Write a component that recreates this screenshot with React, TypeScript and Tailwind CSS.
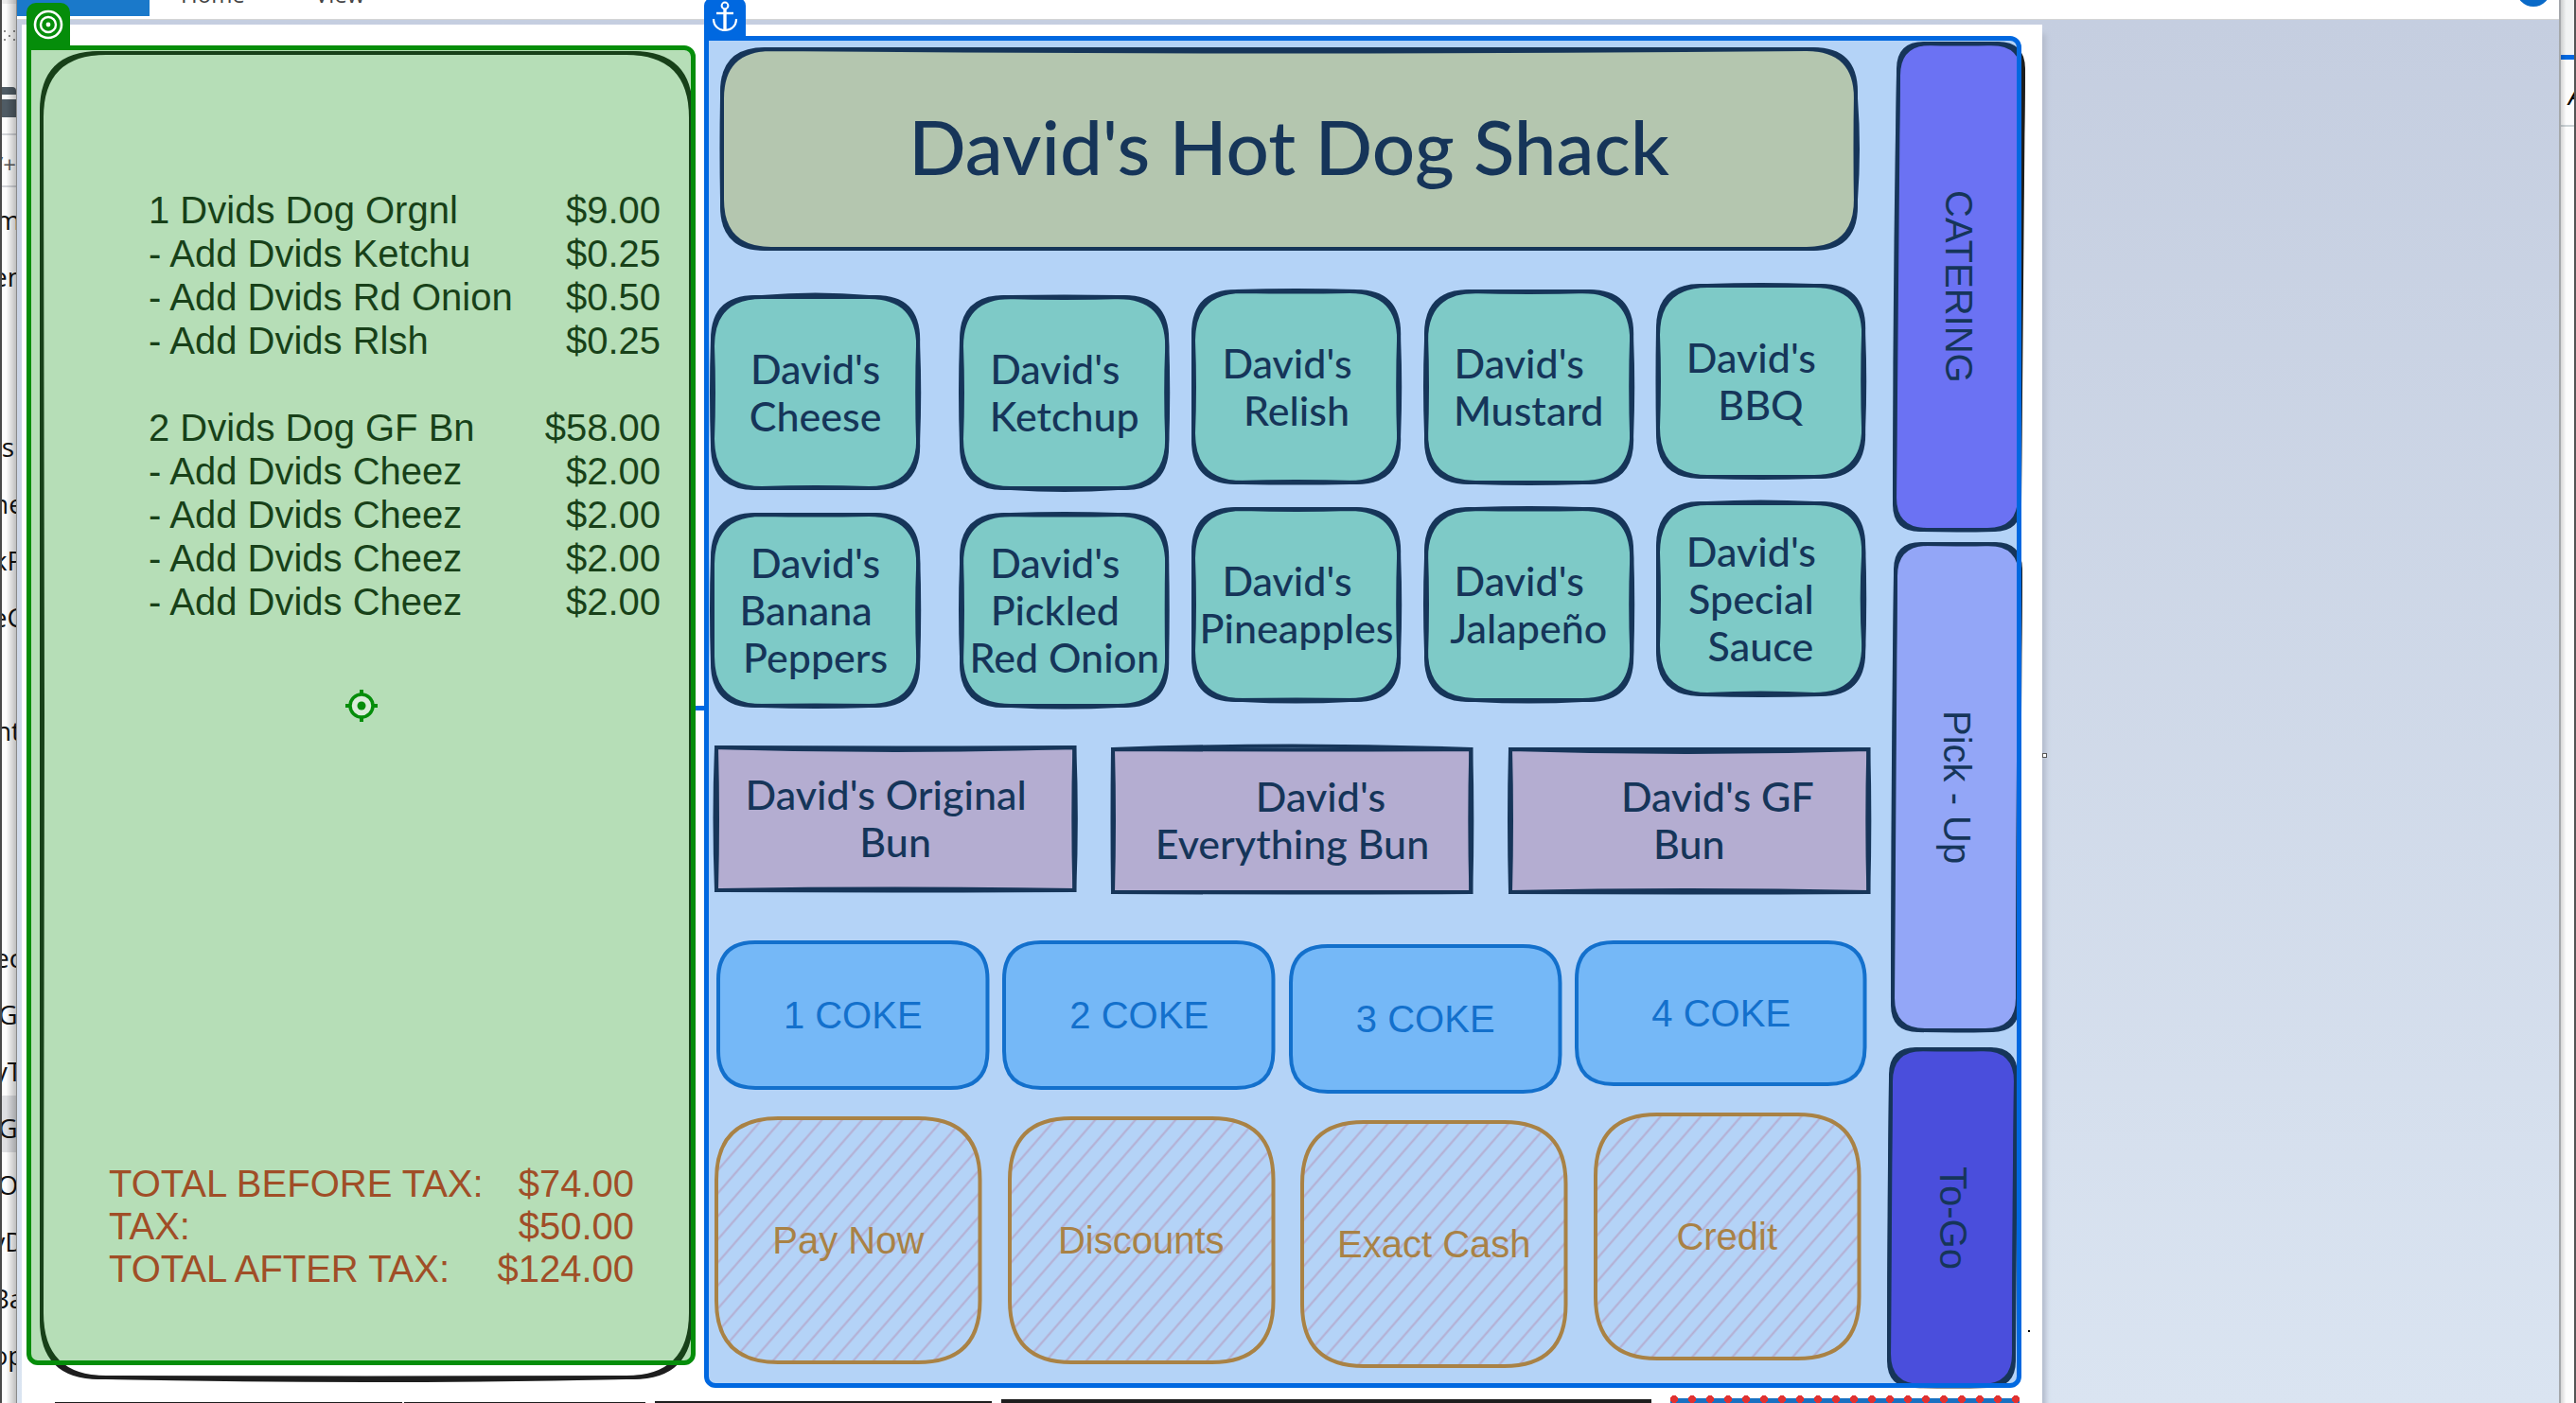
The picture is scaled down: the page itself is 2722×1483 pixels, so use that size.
import React, { useId } from "react";

type Bow = [number, number, number, number];

const roundedPath = (w: number, h: number, r: number, bow: Bow, skew = 0, inset = 2) => {
  const l = inset;
  const t = inset;
  const x = w - inset;
  const y = h - inset;
  const s = skew;
  return [
    `M${l + r + s} ${t}`,
    `Q${w / 2} ${t + bow[0]} ${x - r + s} ${t}`,
    `Q${x + s} ${t} ${x + s} ${t + r}`,
    `Q${x + bow[1]} ${h / 2} ${x} ${y - r}`,
    `Q${x} ${y} ${x - r} ${y}`,
    `Q${w / 2} ${y + bow[2]} ${l + r} ${y}`,
    `Q${l} ${y} ${l} ${y - r}`,
    `Q${l + bow[3]} ${h / 2} ${l + s} ${t + r}`,
    `Q${l + s} ${t} ${l + r + s} ${t}Z`,
  ].join(" ");
};

type SketchProps = {
  w: number;
  h: number;
  r: number;
  fill: string;
  stroke: string;
  bows?: Bow[];
  skew?: number;
  hatch?: boolean;
};

function Sketch({ w, h, r, fill, stroke, bows = [[0, 0, 0, 0]], skew = 0, hatch = false }: SketchProps) {
  const id = useId();
  return (
    <svg
      viewBox={`0 0 ${w} ${h}`}
      preserveAspectRatio="none"
      className="absolute inset-0 h-full w-full overflow-visible"
      aria-hidden="true"
    >
      {hatch && (
        <pattern id={id} width="16" height="16" patternUnits="userSpaceOnUse" patternTransform="rotate(41)">
          <line x1="8" y1="0" x2="8" y2="16" stroke={fill} strokeWidth="2" />
        </pattern>
      )}
      <path d={roundedPath(w, h, r, [0, 0, 0, 0], skew)} fill={hatch ? `url(#${id})` : fill} />
      {bows.map((bow, i) => (
        <path
          key={i}
          d={roundedPath(w, h, r + (i === 0 ? 0 : -7), bow, skew)}
          fill="none"
          stroke={stroke}
          strokeWidth="4"
          strokeLinejoin="round"
        />
      ))}
    </svg>
  );
}

const INK = "#1e1e1e";
const HAND = "font-[Excalifont,Virgil,Lato,sans-serif] font-medium";

type Line = { text: string; pad?: string };
type Topping = { lines: Line[]; align: string; bows: Bow[] };

const david: Line = { text: "David's", pad: "pr-5" };

const toppingRows: Topping[][] = [
  [
    { lines: [{ text: "David's" }, { text: "Cheese" }], align: "self-end mr-[18px]", bows: [[-5, 2, -2, 2], [0, -2, 0, -2]] },
    { lines: [david, { text: "Ketchup" }], align: "self-end", bows: [[-1, -2, 4, 2], [2, 2, 0, -2]] },
    { lines: [david, { text: "Relish" }], align: "self-center", bows: [[1, 2, 1, 2], [-2, -2, -2, 0]] },
    { lines: [david, { text: "Mustard" }], align: "self-center", bows: [[0, 2, 2, -2], [2, -2, 0, 2]] },
    { lines: [david, { text: "BBQ" }], align: "self-start", bows: [[-2, 2, 2, 2], [0, -2, 0, -1]] },
  ],
  [
    { lines: [{ text: "David's" }, { text: "Banana", pad: "pr-5" }, { text: "Peppers" }], align: "self-end mr-[18px]", bows: [[1, -2, 2, 0], [0, 2, -1, -2]] },
    { lines: [david, { text: "Pickled", pad: "pr-5" }, { text: "Red Onion" }], align: "self-end", bows: [[-2, 1, 3, -2], [1, -1, 0, 2]] },
    { lines: [david, { text: "Pineapples" }], align: "self-center", bows: [[2, 2, 3, 2], [0, -2, -1, 0]] },
    { lines: [david, { text: "Jalapeño" }], align: "self-center", bows: [[-2, -2, 3, -2], [1, 2, 0, 2]] },
    { lines: [david, { text: "Special", pad: "pr-5" }, { text: "Sauce" }], align: "self-start", bows: [[-3, -3, -3, 2], [0, 2, 2, 0]] },
  ],
];

const buns: { lines: Line[]; align: string; bows: Bow[] }[] = [
  { lines: [{ text: "David's Original", pad: "pr-5" }, { text: "Bun" }], align: "self-start", bows: [[6, 3, -3, -3], [1, -2, 1, 2]] },
  { lines: [{ text: "David's", pad: "pl-15" }, { text: "Everything Bun" }], align: "self-end", bows: [[-7, -2, 1, 2], [1, 2, 0, -1]] },
  { lines: [{ text: "David's GF", pad: "pl-15" }, { text: "Bun" }], align: "self-end", bows: [[6, 2, -4, 2], [0, -2, 1, -2]] },
];

const cokes = [
  { label: "1 COKE", size: "flex-[288] h-[158px] self-start", w: 288, h: 158 },
  { label: "2 COKE", size: "flex-[288] h-[158px] self-start", w: 288, h: 158 },
  { label: "3 COKE", size: "flex-[288] h-[158px] self-end", w: 288, h: 158 },
  { label: "4 COKE", size: "flex-[308] h-[154px] self-start", w: 308, h: 154 },
];

const payments = [
  { label: "Pay Now", align: "self-center" },
  { label: "Discounts", align: "self-center" },
  { label: "Exact Cash", align: "self-end" },
  { label: "Credit", align: "self-start" },
];

const modes = [
  { label: "CATERING", fill: "#9775fa", size: "h-[518px]", h: 518, skew: 4 },
  { label: "Pick - Up", fill: "#d0bfff", size: "-ml-0.5 mr-0.5 mt-[11px] h-[518px]", h: 518, skew: 3 },
  { label: "To-Go", fill: "#6741d9", size: "-ml-1.5 mr-1.5 mt-4 h-[360px]", h: 360, skew: 2 },
];

const order: [string, string][][] = [
  [
    ["1 Dvids Dog Orgnl", "$9.00"],
    ["- Add Dvids Ketchu", "$0.25"],
    ["- Add Dvids Rd Onion", "$0.50"],
    ["- Add Dvids Rlsh", "$0.25"],
  ],
  [
    ["2 Dvids Dog GF Bn", "$58.00"],
    ["- Add Dvids Cheez", "$2.00"],
    ["- Add Dvids Cheez", "$2.00"],
    ["- Add Dvids Cheez", "$2.00"],
    ["- Add Dvids Cheez", "$2.00"],
  ],
];

const totals: [string, string][] = [
  ["TOTAL BEFORE TAX:", "$74.00"],
  ["TAX:", "$50.00"],
  ["TOTAL AFTER TAX:", "$124.00"],
];

const backList = ["m", "en", "", "", "s", "ne", "kP", "eC", "", "nt", "", "", "", "ec", "G", "yT", "G", "O", "yD", "Ba", "op"];

function Lines({ lines }: { lines: Line[] }) {
  return (
    <span className={`relative flex flex-col items-center text-[43px] leading-[50px] whitespace-nowrap ${HAND}`}>
      {lines.map((l) => (
        <span key={l.text} className={l.pad}>
          {l.text}
        </span>
      ))}
    </span>
  );
}

function BackWindow() {
  return (
    <div className="relative w-[18px] shrink-0 overflow-hidden border-r border-[#8a8a8a] bg-[#fdfdfd] font-['Open_Sans',sans-serif] text-[28px] text-[#111]">
      <div className="h-[92px] border-t-4 border-[#ececec] pt-[28px]">
        <svg width="17" height="13" viewBox="0 0 17 13" fill="#8c8c8c" aria-hidden="true">
          <path d="M4 0h2v2H4zM14 0h2v2h-2zM0 5h1v2H0zM9 5h2v2H9zM4 9h2v2H4zM14 9h2v2h-2z" />
        </svg>
      </div>
      <div className="h-2 rounded-tr-[4px] bg-[#4f5b64]" />
      <div className="mt-[5px] h-[19px] bg-[#4f5b64]" />
      <div className="mt-[17px] flex h-[57px] items-center justify-end border-y-2 border-[#d3d5d9] pt-2 text-[24px] text-[#555]">/+</div>
      {backList.map((t, i) => (
        <div
          key={i}
          className={`flex h-[60px] justify-center pt-1 leading-[60px] whitespace-nowrap ${i === 16 ? "bg-[#dedfe2]" : ""}`}
        >
          {t}
        </div>
      ))}
      <div className="absolute inset-0 border-l-2 border-[#4a4a4a] bg-linear-to-r from-transparent from-30% to-black/25" />
    </div>
  );
}

function Receipt() {
  return (
    <section aria-label="Order" className="relative mt-[10px] h-[1413px] w-[707px] shrink-0">
      <div className="absolute top-[6px] right-[3px] bottom-[3px] left-[14px]">
        <Sketch w={690} h={1404} r={68} fill="none" stroke={INK} bows={[[0, 0, 6, 2], [0, 0, 1, 0]]} />
      </div>
      <div className="relative flex h-full flex-col pt-[151px] font-['Liberation_Sans',sans-serif] text-[40px] leading-[46px] text-[#1e1e1e]">
        <table className="mr-[37px] ml-[129px]">
          {order.map((group, g) => (
            <tbody key={g} className={g > 0 ? "before:block before:h-[46px]" : ""}>
              {group.map(([name, price], i) => (
                <tr key={i}>
                  <td>{name}</td>
                  <td className="text-right">{price}</td>
                </tr>
              ))}
            </tbody>
          ))}
        </table>
        <table className="mt-auto mr-[65px] mb-[97px] ml-[87px] leading-[45px] text-[#e03131]">
          <tbody>
            {totals.map(([name, price]) => (
              <tr key={name}>
                <td>{name}</td>
                <td className="text-right">{price}</td>
              </tr>
            ))}
          </tbody>
        </table>
      </div>
      <div className="pointer-events-none absolute inset-x-0 top-0 bottom-[18px] flex items-center justify-center rounded-[12px] rounded-tl-none border-5 border-[#058d0a] bg-[#0c9210]/30">
        <svg width="34" height="34" viewBox="0 0 34 34" fill="none" stroke="#058d0a" aria-hidden="true">
          <path d="M17 0v5M17 29v5M0 17h5M29 17h5" strokeWidth="4" />
          <circle cx="17" cy="17" r="12" fill="#d9ecd9" strokeWidth="3.5" />
          <circle cx="17" cy="17" r="4.5" fill="#058d0a" stroke="none" />
        </svg>
      </div>
      <div className="absolute -top-[45px] left-0 flex h-[45px] w-[46px] items-center justify-center rounded-t-[10px] bg-[#058d0a]">
        <svg width="32" height="32" viewBox="0 0 32 32" fill="none" stroke="#fff" aria-hidden="true">
          <circle cx="16" cy="16" r="14" strokeWidth="2.6" />
          <circle cx="16" cy="16" r="8" strokeWidth="2.4" />
          <circle cx="16" cy="16" r="2.4" fill="#fff" stroke="none" />
        </svg>
      </div>
      <div className="absolute top-[698px] -right-[9px] h-[5px] w-[9px] bg-[#0068e0]" />
    </section>
  );
}

function MenuBoard() {
  return (
    <main className="relative mr-[22px] ml-[9px] flex flex-1 gap-6 text-[#1e1e1e]">
      <div className="flex min-w-0 flex-1 flex-col pt-3">
        <header className="relative mr-[13px] ml-[17px] flex h-[215px] items-center justify-center">
          <Sketch w={1202} h={215} r={52} fill="#ffec99" stroke={INK} bows={[[5, 4, 0, -1], [0, -1, 0, 0]]} />
          <h1 className={`relative pb-2 text-[80px] leading-[100px] whitespace-nowrap ${HAND}`}>David's Hot Dog Shack</h1>
        </header>

        <div className="mt-[35px] mr-[5px] ml-[7px] flex flex-col gap-3">
          {toppingRows.map((row, r) => (
            <div key={r} className="flex h-[218px] gap-6">
              {row.map((item, i) => (
                <button key={i} type="button" className={`relative flex h-[206px] flex-1 items-center justify-center ${item.align}`}>
                  <Sketch w={221} h={206} r={52} fill="#b2f2bb" stroke={INK} bows={item.bows} />
                  <Lines lines={item.lines} />
                </button>
              ))}
            </div>
          ))}
        </div>

        <div className="mt-[39px] ml-[11px] flex h-[158px] gap-[37px]">
          {buns.map((bun, i) => (
            <button key={i} type="button" className={`relative flex h-[156px] flex-1 items-center justify-center ${bun.align}`}>
              <svg viewBox="0 0 382 156" preserveAspectRatio="none" className="absolute inset-0 h-full w-full overflow-visible" aria-hidden="true">
                <rect x="2" y="2" width="378" height="152" fill="#ffc9c9" />
                {bun.bows.map((b, k) => (
                  <path
                    key={k}
                    d={`M2 3Q191 ${3 + b[0]} 380 3Q${380 + b[1]} 78 380 154Q191 ${154 + b[2]} 2 154Q${2 + b[3]} 78 2 3Z`}
                    fill="none"
                    stroke={INK}
                    strokeWidth="4"
                  />
                ))}
              </svg>
              <Lines lines={bun.lines} />
            </button>
          ))}
        </div>

        <div className="mt-[49px] mr-[3px] ml-[13px] flex h-[162px] gap-[14px] font-['Liberation_Sans',sans-serif] text-[40px] leading-[46px] text-[#1971c2]">
          {cokes.map((c) => (
            <button key={c.label} type="button" className={`relative flex items-center justify-center ${c.size}`}>
              <Sketch w={c.w} h={c.h} r={39} fill="#a5d8ff" stroke="#1971c2" />
              <span className="relative">{c.label}</span>
            </button>
          ))}
        </div>

        <div className="mt-5 mr-[10px] ml-[11px] flex h-[270px] gap-[27px] font-['Liberation_Sans',sans-serif] text-[40px] leading-[46px] text-[#f08c00]">
          {payments.map((p) => (
            <button key={p.label} type="button" className={`relative flex h-[262px] flex-1 items-center justify-center ${p.align}`}>
              <Sketch w={282} h={262} r={65} fill="#ffc9c9" stroke="#f08c00" hatch />
              <span className="relative">{p.label}</span>
            </button>
          ))}
        </div>
      </div>

      <nav aria-label="Order type" className="flex w-[136px] flex-col pt-[6px] font-['Liberation_Sans',sans-serif] text-[40px] leading-[46px]">
        {modes.map((m) => (
          <button key={m.label} type="button" className={`relative flex items-center justify-center pl-1 ${m.size}`}>
            <Sketch w={136} h={m.h} r={34} fill={m.fill} stroke={INK} skew={m.skew} bows={[[0, 0, 0, 0], [1, 1, 1, 1]]} />
            <span className="relative [writing-mode:vertical-rl]">{m.label}</span>
          </button>
        ))}
      </nav>

      <div className="pointer-events-none absolute inset-0 rounded-[12px] rounded-tl-none border-5 border-[#0068e0] bg-[#056ce4]/30" />
      <div className="absolute -top-[40px] left-0 flex h-[40px] w-[44px] items-center justify-center rounded-t-[8px] bg-[#0068e0]">
        <svg width="28" height="34" viewBox="0 0 28 34" fill="none" stroke="#fff" aria-hidden="true">
          <circle cx="14" cy="5" r="3.4" strokeWidth="2" />
          <path d="M14 8V31" strokeWidth="3.4" />
          <path d="M5 13H23" strokeWidth="2.4" />
          <path d="M2 19C2 27 8 31 14 31S26 27 26 19" strokeWidth="2.2" />
        </svg>
      </div>
    </main>
  );
}

export default function App() {
  return (
    <div className="flex h-screen w-full overflow-hidden bg-white">
      <BackWindow />
      <div className="flex min-w-0 flex-1 flex-col">
        <div className="flex h-[21px] shrink-0 border-b border-[#d5d5d5] bg-white font-['Open_Sans',sans-serif] text-[24px] leading-[24px] text-[#444]">
          <div className="h-[17px] w-[140px] bg-[#1a79ca]" />
          <div className="flex h-5 flex-1 items-end gap-[74px] overflow-hidden pl-[33px]">
            <a href="#home" className="mb-[14px]">Home</a>
            <a href="#view" className="mb-[14px]">View</a>
          </div>
          <div className="-mt-[29px] mr-[9px] size-9 rounded-full bg-[#0a6ac8]" />
        </div>
        <div className="flex flex-1 bg-linear-to-b from-[#c5cee0] to-[#dae4f1] pt-[5px] pl-[5px]">
          <div className="relative flex min-w-0 flex-1 flex-col bg-white shadow-[5px_9px_5px_-1px_#b4bccd]">
            <div className="flex items-start pt-3 pl-[5px]">
              <Receipt />
              <MenuBoard />
            </div>
            <div className="mt-2 flex h-2 items-end gap-[10px] pr-6 pl-[35px]">
              <div className="h-px flex-[367] bg-[#1e1e1e]" />
              <div className="-ml-2 h-px flex-[255] bg-[#1e1e1e]" />
              <div className="h-[2px] flex-[356] bg-[#1e1e1e]" />
              <div className="h-1 flex-[688] bg-[#1e1e1e]" />
              <div className="ml-[10px] h-2 flex-[369] bg-[radial-gradient(circle_at_4px_4px,#e03131_4px,transparent_4px),linear-gradient(to_bottom,transparent_3px,#1971c2_3px)] bg-size-[19px_8px]" />
            </div>
            <div className="absolute top-[770px] -right-[5px] size-[5px] border border-[#555] bg-white" />
            <div className="absolute top-[1380px] right-[13px] size-[2px] bg-black" />
          </div>
          <div className="w-[546px] shrink-0" />
        </div>
      </div>
      <div className="relative w-[18px] shrink-0 border-l-2 border-[#a5a8ab] bg-[#fcfcfc]">
        <div className="h-[58px] bg-[#f1f3f3]" />
        <div className="h-[5px] bg-[#0068e0]" />
        <div className="h-[71px] overflow-hidden border-b-2 border-[#ccd3d6] pt-4 pl-2 font-['Open_Sans',sans-serif] text-[28px] italic">A</div>
        <div className="absolute inset-0 border-r-2 border-[#555] bg-linear-to-r from-black/15 to-transparent to-40%" />
      </div>
    </div>
  );
}
